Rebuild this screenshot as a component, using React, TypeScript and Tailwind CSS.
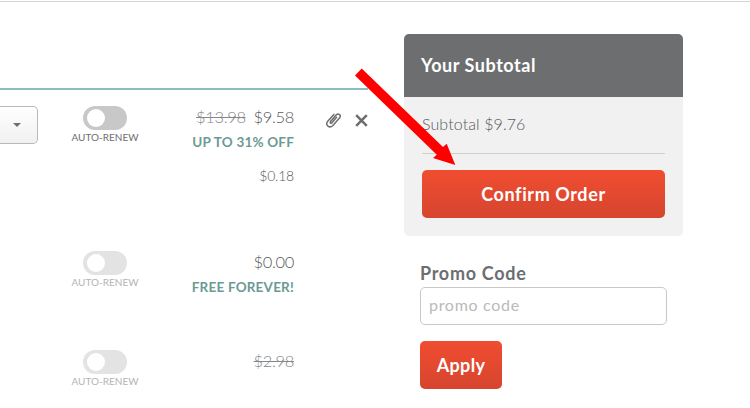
const items = [
  {
    oldPrice: "$13.98",
    price: "$9.58",
    note: "UP TO 31% OFF",
    fee: "$0.18",
    selectable: true,
    muted: false,
    row: "h-[145px]"
  },
  {
    oldPrice: "",
    price: "$0.00",
    note: "FREE FOREVER!",
    fee: "",
    selectable: false,
    muted: true,
    row: "h-[99px]"
  },
  {
    oldPrice: "$2.98",
    price: "",
    note: "",
    fee: "",
    selectable: false,
    muted: true,
    row: "h-[57px]"
  }
];

const Toggle = ({ muted }: { muted: boolean }) => (
  <div className="flex flex-col items-center w-[70px]">
    <div className={`w-11 h-6 rounded-full p-[3px] pl-1 ${muted ? "bg-[#e3e3e3]" : "bg-[#c8c8c8]"}`}>
      <div className="size-[18px] rounded-full bg-white"></div>
    </div>
    <span
      className={`mt-px text-[10px] leading-[12px] whitespace-nowrap ${muted ? "text-[#b3b4b5]" : "text-[#6d6e70]"}`}
    >
      AUTO-RENEW
    </span>
  </div>
);

const RowActions = () => (
  <div className="flex items-center gap-[13px] ml-[31px] mt-[5px] h-[18px] text-[#6d6e70]">
    <svg className="w-[17px] h-[18px]" viewBox="0 0 17 18" fill="none" stroke="currentColor" strokeWidth="1.5" strokeLinecap="round" strokeLinejoin="round">
      <path d="M11.6 6.2 6.9 11.7C5.9 12.9 4.6 11.8 5.5 10.6L11.2 4C13.3 1.7 16.7 4.2 14.7 6.7L7.9 14.4C4.7 17.8-.3 14.2 2.5 10.6L8.9 3.4" />
    </svg>
    <svg className="w-[13px] h-[13px]" viewBox="0 0 13 13" fill="none" stroke="currentColor" strokeWidth="2.5">
      <path d="M1.2 1.2 11.8 11.8M11.8 1.2 1.2 11.8" />
    </svg>
  </div>
);

const Cart = () => {
  return (
    <section className="w-[368px] pt-[86px]">
      <div className="border-b-2 border-[#8bbebc]"></div>
      <div className="pt-4">
        {items.map((item, index) => (
          <div key={index} className={`flex items-start ${item.row}`}>
            <div className="w-[70px] shrink-0">
              {item.selectable && (
                <button className="flex items-center justify-end w-[38px] h-[38px] pr-4 rounded-r-[5px] border border-l-0 border-[#b9b9b9] bg-linear-to-b from-white to-[#f0f0f0]">
                  <span className="border-x-4 border-x-transparent border-t-4 border-t-[#6d6e70]"></span>
                </button>
              )}
            </div>
            <Toggle muted={item.muted} />
            <div className="w-[154px] text-right text-[#58595b] whitespace-nowrap">
              <div className="-mt-px text-[16.5px] leading-[25px] tracking-[-0.35px] font-light">
                {item.oldPrice && <span className="line-through text-[#85878a]">{item.oldPrice}</span>}
                {item.price && <span className="ml-2">{item.price}</span>}
              </div>
              <div className="-mt-px text-[13.5px] leading-[26px] tracking-[0.2px] font-bold text-[#6b9a95]">{item.note}</div>
              <div className="mt-[11px] text-[14px] leading-5 tracking-[-0.2px] font-light">{item.fee}</div>
            </div>
            {item.selectable && <RowActions />}
          </div>
        ))}
      </div>
    </section>
  );
};

const Subtotal = () => {
  return (
    <div className="w-[279px] h-[202px] rounded-[5px] overflow-hidden bg-[#f1f1f1]">
      <div className="h-[63px] pl-[17px] flex items-center bg-[#6d6e70]">
        <h2 className="text-[18px] tracking-[0.55px] font-bold text-white">Your Subtotal</h2>
      </div>
      <div className="px-[18px]">
        <p className="h-14 leading-[54px] text-[16px] tracking-[0.1px] font-light text-[#58595b]">Subtotal $9.76</p>
        <div className="border-t border-[#d0d0d0]"></div>
        <button className="mt-4 w-full h-12 rounded-[5px] text-[18px] tracking-[0.6px] font-bold text-white bg-linear-to-b from-[#f04d30] to-[#d6452f]">
          Confirm Order
        </button>
      </div>
    </div>
  );
};

const Promo = () => {
  return (
    <div className="ml-4 mt-[25px] w-[247px]">
      <label htmlFor="promo" className="block text-[18px] leading-6 tracking-[0.7px] font-bold text-[#6d6e70]">Promo Code</label>
      <input
        id="promo"
        placeholder="promo code"
        className="block mt-[2px] w-full h-[38px] px-2 pb-[3px] rounded-[5px] border border-[#c8c8c8] bg-white text-[16px] tracking-[0.7px] placeholder:text-[#b9babb]"
      />
      <button className="mt-4 w-[82px] h-12 rounded-[5px] text-[18px] tracking-[0.3px] font-bold text-white bg-linear-to-b from-[#f04d30] to-[#d6452f]">
        Apply
      </button>
    </div>
  );
};

const App = () => {
  return (
    <main className="relative w-[750px] h-[408px] overflow-hidden bg-white pt-px font-['Lato',sans-serif]">
      <div className="h-px bg-[#d5d5d5]"></div>
      <div className="flex items-start">
        <Cart />
        <aside className="ml-9 mt-8">
          <Subtotal />
          <Promo />
        </aside>
      </div>
      <svg className="absolute left-0 top-0 pointer-events-none" width="750" height="408" viewBox="0 0 750 408">
        <polygon points="355,75.5 361.7,68.5 443,147 446.7,143.7 455.3,165 433,158 436.8,154.8" fill="#ff0000" />
      </svg>
    </main>
  );
};

export default App;
